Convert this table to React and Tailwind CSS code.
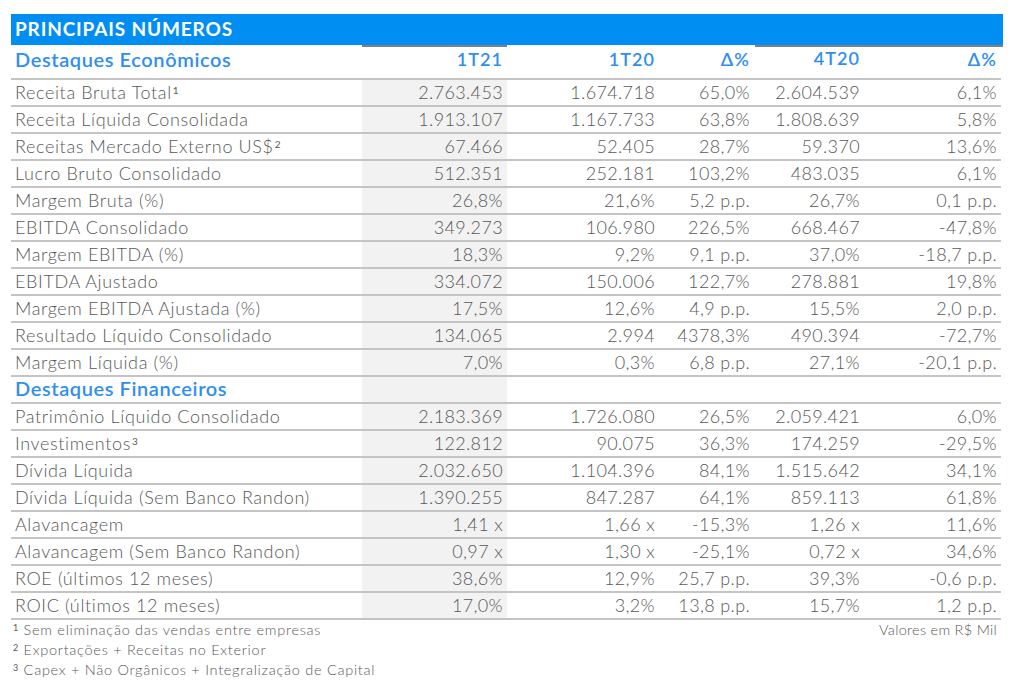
import React from "react";

const econ = [
  ["Receita Bruta Total", "1", "2.763.453", "1.674.718", "65,0%", "2.604.539", "6,1%"],
  ["Receita Líquida Consolidada", "", "1.913.107", "1.167.733", "63,8%", "1.808.639", "5,8%"],
  ["Receitas Mercado Externo US$", "2", "67.466", "52.405", "28,7%", "59.370", "13,6%"],
  ["Lucro Bruto Consolidado", "", "512.351", "252.181", "103,2%", "483.035", "6,1%"],
  ["Margem Bruta (%)", "", "26,8%", "21,6%", "5,2 p.p.", "26,7%", "0,1 p.p."],
  ["EBITDA Consolidado", "", "349.273", "106.980", "226,5%", "668.467", "-47,8%"],
  ["Margem EBITDA (%)", "", "18,3%", "9,2%", "9,1 p.p.", "37,0%", "-18,7 p.p."],
  ["EBITDA Ajustado", "", "334.072", "150.006", "122,7%", "278.881", "19,8%"],
  ["Margem EBITDA Ajustada (%)", "", "17,5%", "12,6%", "4,9 p.p.", "15,5%", "2,0 p.p."],
  ["Resultado Líquido Consolidado", "", "134.065", "2.994", "4378,3%", "490.394", "-72,7%"],
  ["Margem Líquida (%)", "", "7,0%", "0,3%", "6,8 p.p.", "27,1%", "-20,1 p.p."],
];

const fin = [
  ["Patrimônio Líquido Consolidado", "", "2.183.369", "1.726.080", "26,5%", "2.059.421", "6,0%"],
  ["Investimentos", "3", "122.812", "90.075", "36,3%", "174.259", "-29,5%"],
  ["Dívida Líquida", "", "2.032.650", "1.104.396", "84,1%", "1.515.642", "34,1%"],
  ["Dívida Líquida (Sem Banco Randon)", "", "1.390.255", "847.287", "64,1%", "859.113", "61,8%"],
  ["Alavancagem", "", "1,41 x", "1,66 x", "-15,3%", "1,26 x", "11,6%"],
  ["Alavancagem (Sem Banco Randon)", "", "0,97 x", "1,30 x", "-25,1%", "0,72 x", "34,6%"],
  ["ROE (últimos 12 meses)", "", "38,6%", "12,9%", "25,7 p.p.", "39,3%", "-0,6 p.p."],
  ["ROIC (últimos 12 meses)", "", "17,0%", "3,2%", "13,8 p.p.", "15,7%", "1,2 p.p."],
];

const grid = "grid grid-cols-[351px_145px_152px_96px_110px_136px]";

function Row({ r }) {
  return (
    <div className={`${grid} h-[27px] border-b-2 border-[#c4c4c4] text-[18px] font-light text-[#585858] leading-[25px]`}>
      <div className="pl-[4px] whitespace-nowrap tracking-[0.035em]">
        {r[0]}
        {r[1] && <sup className="text-[10px] font-normal ml-[1px]">{r[1]}</sup>}
      </div>
      <div className="bg-[#f2f2f2] text-right pr-[4px] tracking-[0.02em]">{r[2]}</div>
      <div className="text-right pr-[4px] tracking-[0.02em]">{r[3]}</div>
      <div className="text-right pr-[5px] tracking-[0.02em]">{r[4]}</div>
      <div className="text-right pr-[5px] tracking-[0.02em]">{r[5]}</div>
      <div className="text-right pr-[4px] tracking-[0.02em]">{r[6]}</div>
    </div>
  );
}

export default function App() {
  return (
    <div className="w-[1024px] h-[687px] bg-white pt-[14px] pl-[11px]" style={{ fontFamily: "Lato, 'Liberation Sans', sans-serif" }}>
      <div className="w-[992px]">
        <div className="h-[31px] bg-[#008ef2] text-white font-bold text-[19px] tracking-[0.045em] leading-[29px] pl-[4px]">
          PRINCIPAIS NÚMEROS
        </div>
        <div className="w-[990px]">
          <div className={`${grid} h-[2px]`}>
            <div />
            <div className="bg-[#808080]" />
            <div />
            <div />
            <div className="bg-[#808080]" />
            <div className="bg-[#808080] -mr-[2px]" />
          </div>
          <div className={`${grid} h-[33px] border-b-2 border-[#c4c4c4] text-[#2f8ff0] leading-[25px]`}>
            <div className="pl-[4px] text-[20px] font-semibold tracking-[0.03em]">Destaques Econômicos</div>
            <div className="text-right pr-[4px] text-[18px] font-semibold tracking-[0.06em]">1T21</div>
            <div className="text-right pr-[4px] text-[18px] font-semibold tracking-[0.06em]">1T20</div>
            <div className="text-right pr-[5px] text-[18px] font-semibold tracking-[0.06em]">Δ%</div>
            <div className="text-right pr-[5px] text-[18px] font-semibold tracking-[0.06em] leading-[22px]">4T20</div>
            <div className="text-right pr-[4px] text-[18px] font-semibold tracking-[0.06em]">Δ%</div>
          </div>
          {econ.map((r, i) => (
            <Row key={i} r={r} />
          ))}
          <div className={`${grid} h-[27px] border-b-2 border-[#c4c4c4] text-[#2f8ff0] leading-[22px]`}>
            <div className="pl-[4px] text-[20px] font-semibold tracking-[0.03em]">Destaques Financeiros</div>
            <div className="bg-[#f2f2f2]" />
            <div />
            <div />
            <div />
            <div />
          </div>
          {fin.map((r, i) => (
            <Row key={i} r={r} />
          ))}
          <div className="flex justify-between text-[14.5px] font-light text-[#585858] tracking-[0.05em] pr-[4px] pl-[2px]">
            <div className="flex flex-col leading-[20px]">
              <div><sup className="text-[9px] font-normal">1</sup> Sem eliminação das vendas entre empresas</div>
              <div><sup className="text-[9px] font-normal">2</sup> Exportações + Receitas no Exterior</div>
              <div><sup className="text-[9px] font-normal">3</sup> Capex + Não Orgânicos + Integralização de Capital</div>
            </div>
            <div className="leading-[20px] tracking-[0.02em]">Valores em R$ Mil</div>
          </div>
        </div>
      </div>
    </div>
  );
}
